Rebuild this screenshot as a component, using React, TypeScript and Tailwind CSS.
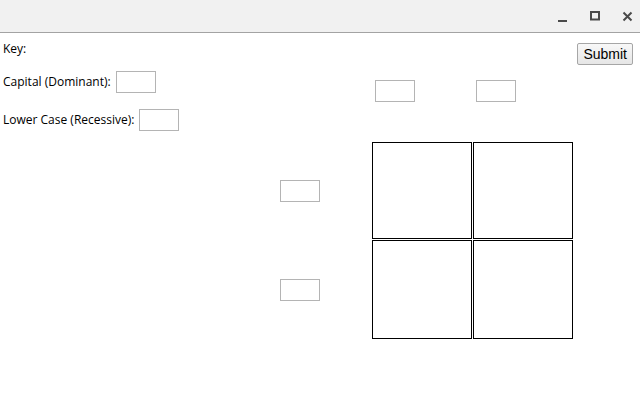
import React from 'react';

const font = { fontFamily: '"Open Sans", "Noto Sans", sans-serif' };

const Box = ({ className = '' }: { className?: string }) => (
  <input type="text" className={`w-[40px] h-[22px] border border-[#b4b4b4] bg-white outline-none ${className}`} />
);

const Cell = () => <div className="border border-black bg-white" />;

const TitleBar = () => (
  <div className="h-[33px] bg-[#f1f1f1] border-b border-[#a3a3a3] flex items-center justify-end">
    {/* minimize */}
    <svg width="32" height="32" viewBox="0 0 32 32">
      <rect x="14" y="20" width="9" height="2" fill="#4a4a4a" />
    </svg>
    {/* maximize */}
    <svg width="32" height="32" viewBox="0 0 32 32">
      <rect x="15" y="12" width="8" height="7.5" fill="none" stroke="#4a4a4a" strokeWidth="2" />
    </svg>
    {/* close */}
    <svg width="32" height="32" viewBox="0 0 32 32">
      <path d="M15.5 12.5 L23.5 20.5 M23.5 12.5 L15.5 20.5" stroke="#4a4a4a" strokeWidth="2" />
    </svg>
  </div>
);

export default function App() {
  return (
    <div className="w-[640px] h-[400px] bg-white overflow-hidden text-black">
      <TitleBar />
      <div className="flex">
        {/* key */}
        <div className="w-[280px] pl-[3px] text-[12px]" style={font}>
          <div className="mt-[8px] h-[16px] leading-[16px]">Key:</div>
          <div className="mt-[14px] flex items-center gap-[5px]">
            <span>Capital (Dominant):</span>
            <Box />
          </div>
          <div className="mt-[16px] flex items-center gap-[5px]">
            <span>Lower Case (Recessive):</span>
            <Box />
          </div>
        </div>

        {/* punnett square */}
        <div className="mt-[47px] grid grid-cols-[91px_100px_100px] grid-rows-[61px_97px_99px] gap-px">
          <div />
          <Box className="ml-[3px] self-start" />
          <Box className="ml-[3px] self-start" />
          <Box className="self-center" />
          <Cell />
          <Cell />
          <Box className="self-center" />
          <Cell />
          <Cell />
        </div>

        <div className="flex-1 flex justify-end pr-[7px]">
          <button
            className="mt-[10px] h-[22px] px-[5px] text-[14px] leading-none border border-[#a6a6a6] rounded-[2px] bg-gradient-to-b from-[#f8f8f8] to-[#e6e6e6]"
            style={{ fontFamily: '"Liberation Sans", Arial, sans-serif' }}
          >
            Submit
          </button>
        </div>
      </div>
    </div>
  );
}
